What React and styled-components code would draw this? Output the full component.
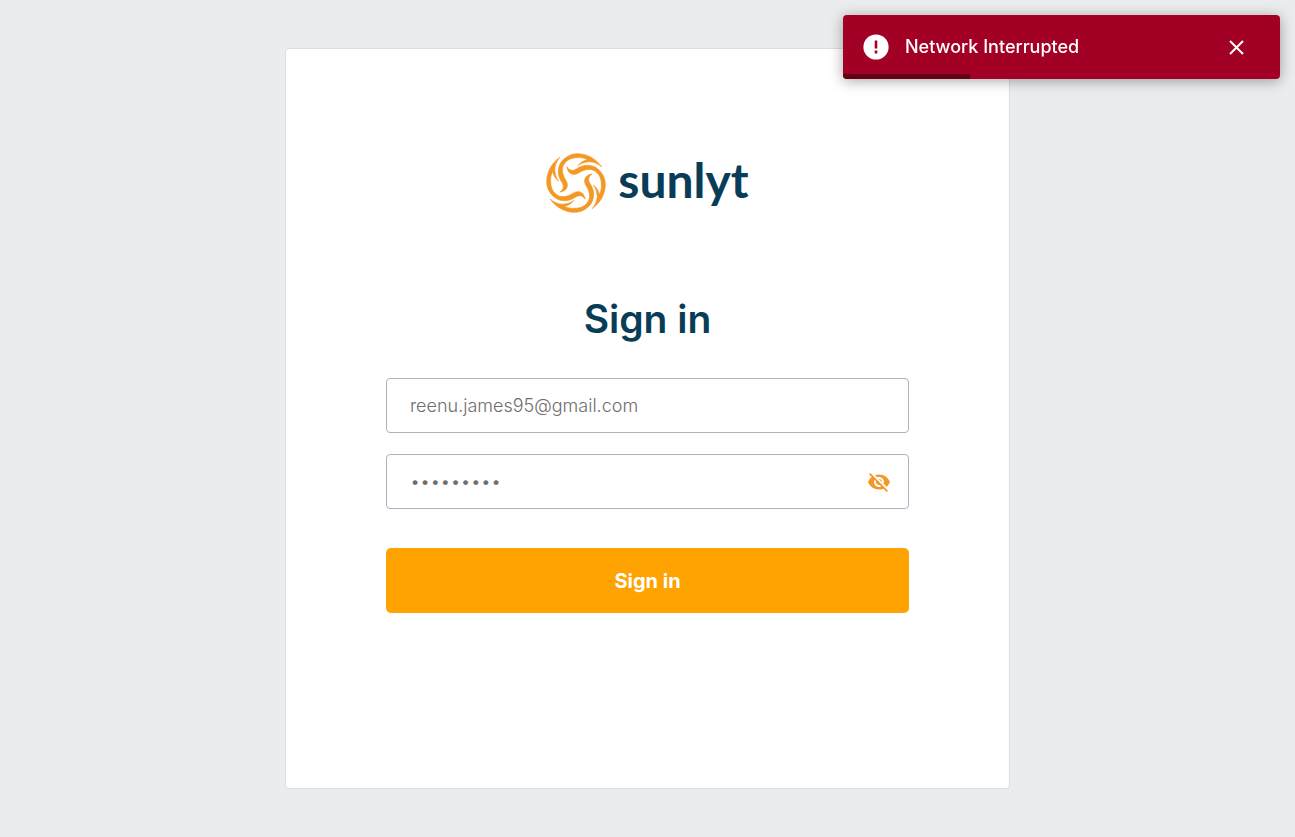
import React, { useState } from "react";
import styled, { createGlobalStyle } from "styled-components";

const GlobalStyle = createGlobalStyle`
  *, *::before, *::after { box-sizing: border-box; }
  body {
    margin: 0;
    background: #eaecee;
    font-family: Inter, "Liberation Sans", sans-serif;
  }
`;

const Page = styled.main`
  display: flex;
  justify-content: center;
  min-height: 100vh;
  padding: 48px 0;
`;

const Card = styled.section`
  display: flex;
  flex-direction: column;
  align-items: center;
  width: 56%;
  min-width: 320px;
  padding: 104px 100px;
  background: #fff;
  border: 1px solid #dcdee1;
  border-radius: 4px;
`;

const Brand = styled.div`
  display: flex;
  align-items: center;
  gap: 12px;
  height: 60px;
`;

const Wordmark = styled.span`
  padding-bottom: 6px;
  font-family: Lato, "Noto Sans", sans-serif;
  font-size: 48px;
  font-weight: 700;
  line-height: 56px;
  color: #093d57;
`;

const Title = styled.h1`
  margin: 80px 0 33px;
  font-size: 39px;
  font-weight: 600;
  line-height: 52px;
  color: #093d57;
`;

const Form = styled.form`
  display: flex;
  flex-direction: column;
  gap: 21px;
  width: 100%;
`;

const Field = styled.label`
  display: flex;
  align-items: center;
  height: 55px;
  padding: 1px 17px 0 23px;
  border: 1px solid #adb3c0;
  border-radius: 4px;
  background: #fff;
`;

const Input = styled.input`
  flex: 1;
  min-width: 0;
  padding: 0;
  border: 0;
  outline: 0;
  background: transparent;
  font-family: inherit;
  font-size: 18px;
  font-weight: 300;
  line-height: 26px;
  color: #6e6e6e;
`;

const IconButton = styled.button`
  display: flex;
  padding: 0;
  border: 0;
  background: none;
  color: ${({ $color }) => $color};
  cursor: pointer;
`;

const SubmitButton = styled.button`
  height: 65px;
  margin-top: 18px;
  border: 0;
  border-radius: 5px;
  background: #ffa300;
  color: #fff;
  font-family: inherit;
  font-size: 20px;
  font-weight: 700;
  cursor: pointer;
`;

const Toast = styled.div`
  position: fixed;
  top: 15px;
  right: 15px;
  display: flex;
  align-items: center;
  width: 437px;
  max-width: calc(100% - 30px);
  height: 64px;
  padding: 0 34px 0 20px;
  border-radius: 4px;
  overflow: hidden;
  background: #a30025;
  color: #fff;
  box-shadow: 0 2px 14px rgba(0, 0, 0, 0.35);
`;

const ToastText = styled.span`
  flex: 1;
  margin-left: 16px;
  font-size: 18px;
  font-weight: 500;
  line-height: 24px;
`;

const ToastProgress = styled.div`
  position: absolute;
  left: 0;
  bottom: 0;
  width: 29%;
  height: 5px;
  background: #620016;
`;

function SunMark() {
  return (
    <svg width="60" height="60" viewBox="17 17 178 178" fill="#f49825" stroke="#f49825" strokeWidth="2" aria-hidden="true">
      {[0, 90, 180, 270].map((angle) => (
        <path
          key={angle}
          transform={`rotate(${angle} 106 106)`}
          d="M79 58C86 70 98 71 108 64C126 51 150 50 168 62C184 74 193 92 193 110C193 138 178 166 154 182C166 168 171 152 168 138C167 128 163 120 158 112C167 120 173 128 175 140C181 130 182 118 181 108C181 92 174 78 161 70C147 62 130 66 116 75C101 85 82 82 79 58Z"
        />
      ))}
    </svg>
  );
}

export default function App() {
  const [visible, setVisible] = useState(false);
  const [toastOpen, setToastOpen] = useState(true);
  return (
    <>
      <GlobalStyle />
      <Page>
        <Card>
          <Brand>
            <SunMark />
            <Wordmark>sunlyt</Wordmark>
          </Brand>
          <Title>Sign in</Title>
          <Form onSubmit={(e) => e.preventDefault()}>
            <Field>
              <Input type="email" aria-label="Email" defaultValue="reenu.james95@gmail.com" />
            </Field>
            <Field>
              <Input type={visible ? "text" : "password"} aria-label="Password" defaultValue="sunlight1" />
              <IconButton type="button" $color="#f49825" aria-label="Toggle password visibility" onClick={() => setVisible(!visible)}>
                <svg width="24" height="24" viewBox="0 0 24 24" fill="currentColor">
                  <path d="M12 7c2.76 0 5 2.24 5 5 0 .65-.13 1.26-.36 1.83l2.92 2.92c1.51-1.26 2.7-2.89 3.43-4.75-1.73-4.39-6-7.5-11-7.5-1.4 0-2.74.25-3.98.7l2.16 2.16C10.74 7.13 11.35 7 12 7zM2 4.27l2.28 2.28.46.46C3.08 8.3 1.78 10.02 1 12c1.73 4.39 6 7.5 11 7.5 1.55 0 3.03-.3 4.38-.84l.42.42L19.73 22 21 20.73 3.27 3 2 4.27zM7.53 9.8l1.55 1.55c-.05.21-.08.43-.08.65 0 1.66 1.34 3 3 3 .22 0 .44-.03.65-.08l1.55 1.55c-.67.33-1.41.53-2.2.53-2.76 0-5-2.24-5-5 0-.79.2-1.53.53-2.2zm4.31-.78l3.15 3.15.02-.16c0-1.66-1.34-3-3-3l-.17.01z" />
                </svg>
              </IconButton>
            </Field>
            <SubmitButton type="submit">Sign in</SubmitButton>
          </Form>
        </Card>
      </Page>
      {toastOpen && (
        <Toast role="alert">
          <svg width="26" height="26" viewBox="0 0 26 26" aria-hidden="true">
            <circle cx="13" cy="13" r="12.6" fill="#fff" />
            <path d="M11.7 6.5h2.6v8h-2.6zM11.7 16.5h2.6v3h-2.6z" fill="#a30025" />
          </svg>
          <ToastText>Network Interrupted</ToastText>
          <IconButton type="button" $color="#fff" aria-label="Close" onClick={() => setToastOpen(false)}>
            <svg width="18" height="18" viewBox="0 0 18 18" fill="none" stroke="currentColor" strokeWidth="2">
              <path d="M2 3l13 13M15 3l-13 13" />
            </svg>
          </IconButton>
          <ToastProgress />
        </Toast>
      )}
    </>
  );
}
